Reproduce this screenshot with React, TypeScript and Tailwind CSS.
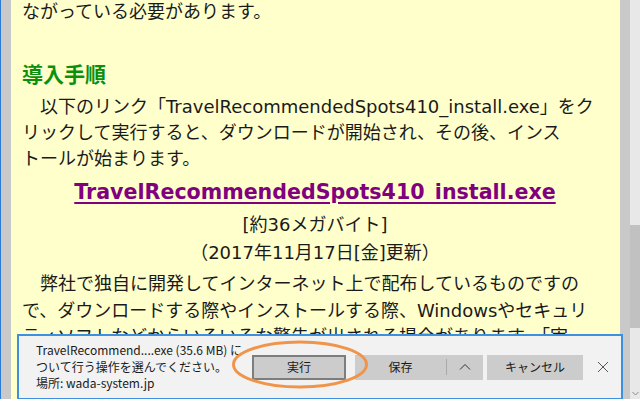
import React from 'react';

const SCROLL_THUMB_TOP = 225;

const DownloadBar: React.FC = () => {
  return (
    <div className="absolute left-[17px] top-[334px] w-[606px] h-[66px] bg-[#f2f2f2] border-2 border-[#3d8fe0] flex items-center font-['Noto_Sans_CJK_JP',sans-serif] text-[12px] text-[#1a1a1a]">
      {/* message */}
      <div className="pl-[17px] w-[233px] leading-[16.5px] whitespace-nowrap">
        <div>TravelRecommend....exe (35.6 MB) に</div>
        <div>ついて行う操作を選んでください。</div>
        <div>場所: wada-system.jp</div>
      </div>

      {/* buttons */}
      <button className="w-[94px] h-[25px] bg-[#cccccc] border-2 border-[#7d7d7d] flex items-center justify-center">
        実行
      </button>
      <div className="ml-[9px] w-[128px] h-[25px] bg-[#cccccc] flex items-center">
        <span className="w-[91px] text-center">保存</span>
        <span className="w-px h-[16px] bg-[#a9a9a9]" />
        <span className="flex-1 flex items-center justify-center">
          <svg width="12" height="8" viewBox="0 0 12 8">
            <path d="M1 6.5 L6 1.5 L11 6.5" fill="none" stroke="#333" strokeWidth="1" />
          </svg>
        </span>
      </div>
      <button className="ml-[4px] w-[96px] h-[25px] bg-[#cccccc] flex items-center justify-center">
        キャンセル
      </button>
      <div className="flex-1 flex items-center justify-center pl-[1px]">
        <svg width="12" height="12" viewBox="0 0 12 12">
          <path d="M1 1 L11 11 M11 1 L1 11" fill="none" stroke="#555" strokeWidth="1" />
        </svg>
      </div>
    </div>
  );
};

const App: React.FC = () => {
  return (
    <div className="relative w-[640px] h-[399px] overflow-hidden flex bg-[#c9c9c9] font-['DejaVu_Sans','Noto_Sans_CJK_JP',sans-serif]">
      {/* window edge */}
      <div className="w-px bg-[#2b7bd8]" />
      <div className="w-[10px]" />

      {/* page content (the part under the download bar is hidden) */}
      <div className="w-[609px] bg-[#ffffcc]">
        <div className="h-[334px] overflow-hidden pl-[11px] pr-[12px] text-[18px] text-[#1a1a1a] whitespace-nowrap">
          <p className="-mt-px leading-[26px]">ながっている必要があります。</p>

          <h3 className="mt-[36px] leading-[28px] text-[21px] font-bold text-[#0c900c]">導入手順</h3>

          <p className="mt-[5px] leading-[26px]">
            <span className="pl-[18px]">以下のリンク「TravelRecommendedSpots410_install.exe」をク</span>
            <br />
            リックして実行すると、ダウンロードが開始され、その後、インス
            <br />
            トールが始まります。
          </p>

          <div className="mt-[6px] leading-[28px] text-center">
            <a className="text-[20.6px] font-bold text-[#800080] underline underline-offset-[3px]">
              TravelRecommendedSpots410_install.exe
            </a>
          </div>
          <div className="mt-[5px] leading-[26px] text-center">[約36メガバイト]</div>
          <div className="mt-[2px] leading-[26px] text-center">（2017年11月17日[金]更新）</div>

          <p className="mt-[5px] leading-[26.5px]">
            <span className="pl-[18px]">弊社で独自に開発してインターネット上で配布しているものですの</span>
            <br />
            で、ダウンロードする際やインストールする際、Windowsやセキュリ
            <br />
            ティソフトなどからいろいろな警告が出される場合があります。「実
          </p>
        </div>
      </div>

      <div className="w-[10px]" />

      {/* scrollbar */}
      <div className="w-[10px] flex flex-col bg-[#e8e8e8]">
        <div style={{ height: SCROLL_THUMB_TOP }} />
        <div className="h-[103px] bg-[#c1c1c1]" />
        <div className="flex-1 flex items-end pb-[3px] pl-[2px]">
          <svg width="7" height="5" viewBox="0 0 7 5">
            <path d="M0.5 1 L3.5 4 L6.5 1" fill="none" stroke="#8a8a8a" strokeWidth="1" />
          </svg>
        </div>
      </div>

      <DownloadBar />

      {/* highlight ring around the run button */}
      <svg className="absolute left-[230px] top-[340px]" width="140" height="50" viewBox="0 0 140 50">
        <ellipse cx="70" cy="24.5" rx="66.5" ry="22.5" fill="none" stroke="#f0944a" strokeWidth="3" />
      </svg>
    </div>
  );
};

export default App;
